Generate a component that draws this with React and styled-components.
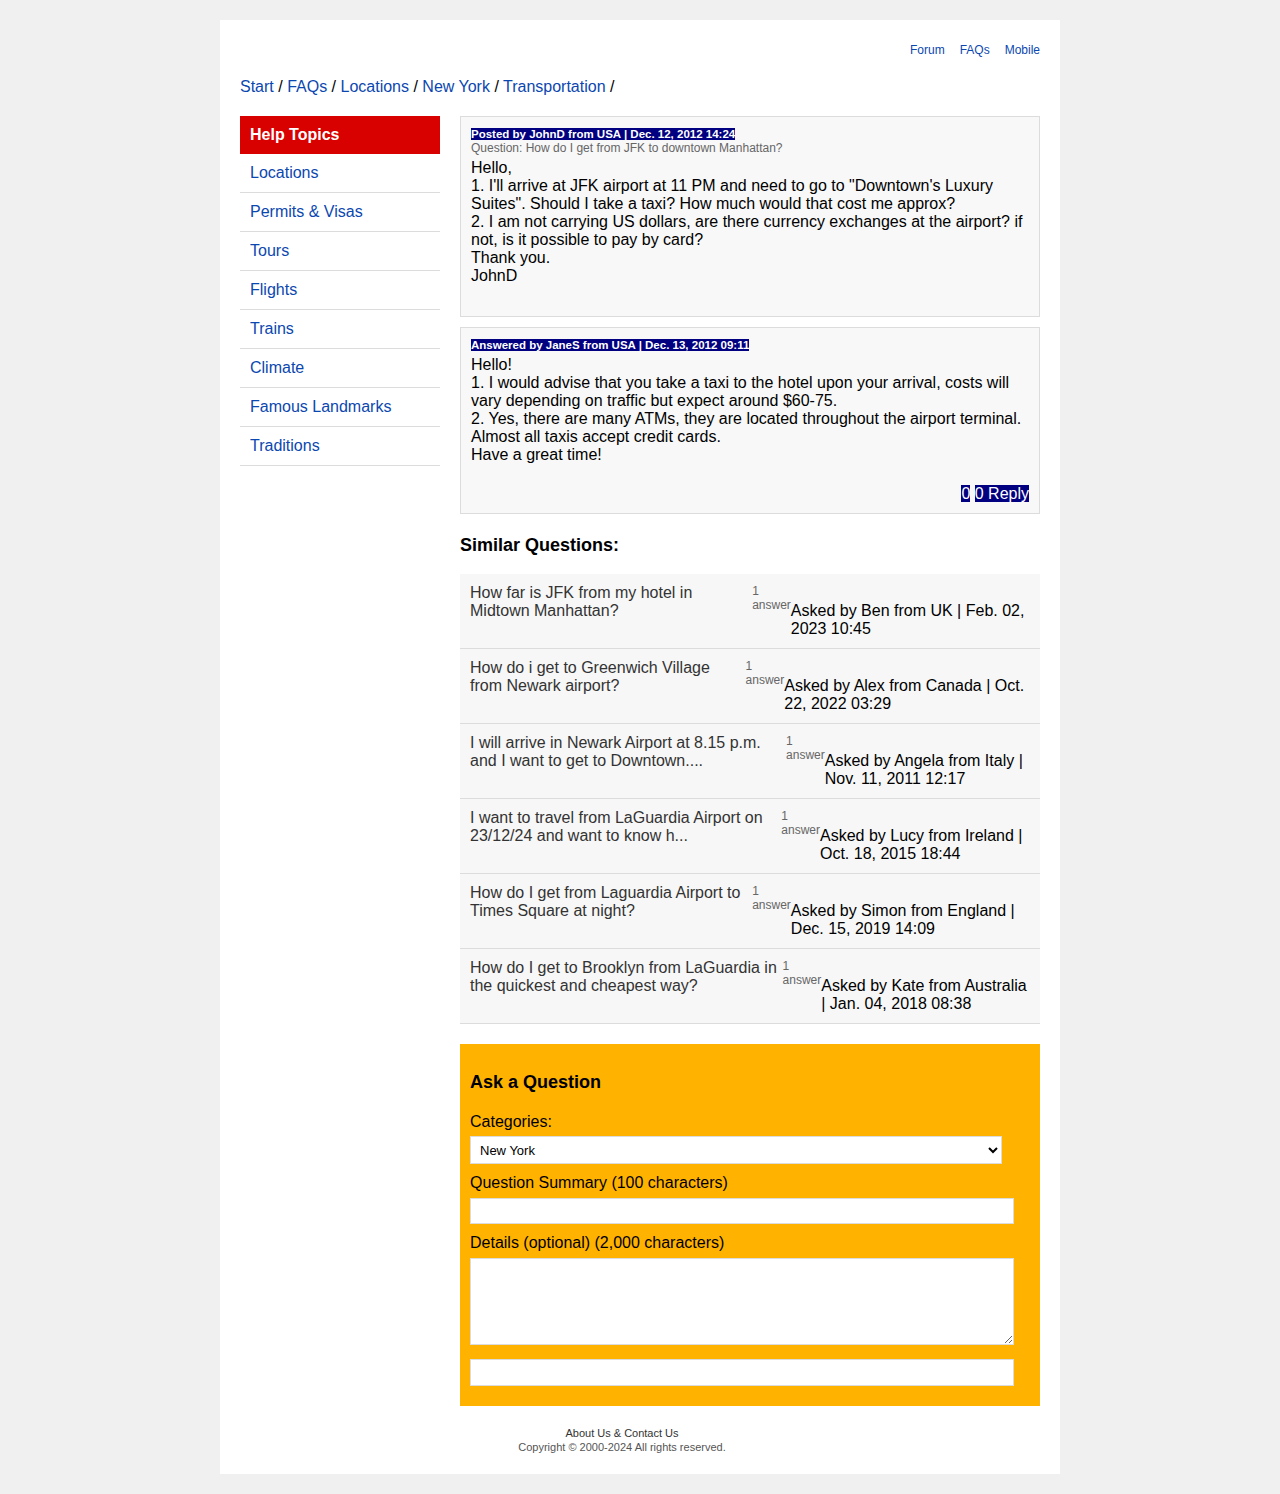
import React from "react";
import styled, { createGlobalStyle } from "styled-components";

const GlobalStyle = createGlobalStyle`
  html, body { margin: 0; padding: 0; }
  body {
    background: #f0f0f0;
    font-family: "Liberation Sans", Arial, sans-serif;
    color: #000;
  }
`;

const LINK = "#0b47b0";
const NAVY = "#000080";

const Page = styled.div`
  width: 800px;
  margin: 20px auto;
  padding: 20px;
  background: #fff;
`;

const TopNav = styled.nav`
  display: flex;
  justify-content: flex-end;
  gap: 15px;
  margin-top: 3px;
  font-size: 12px;
  line-height: 14px;
`;

const NavLink = styled.a`
  color: ${LINK};
  text-decoration: none;
`;

const Breadcrumb = styled.div`
  margin: 21px 0 20px;
  font-size: 16px;
  line-height: 18px;
`;

const CrumbLink = styled.a`
  color: ${LINK};
  text-decoration: none;
`;

const Columns = styled.div`
  display: flex;
  gap: 20px;
  align-items: flex-start;
`;

const Sidebar = styled.aside`
  width: 200px;
  flex: 0 0 200px;
`;

const SideHeader = styled.div`
  background: #d90000;
  color: #fff;
  font-weight: bold;
  font-size: 16px;
  height: 38px;
  line-height: 38px;
  padding: 0 10px;
`;

const SideItem = styled.a`
  display: block;
  padding: 10px;
  font-size: 16px;
  line-height: 18px;
  color: ${LINK};
  text-decoration: none;
  border-bottom: 1px solid #dcdcdc;
`;

const Main = styled.main`
  width: 580px;
  flex: 0 0 580px;
`;

const PostBox = styled.div`
  border: 1px solid #dcdcdc;
  background: #f8f8f8;
  padding: 10px;
  margin-bottom: ${(p) => p.$mb || 0}px;
`;

const Meta = styled.div`
  font-size: 11.5px;
  line-height: 14px;
  font-weight: bold;
`;

const MetaText = styled.span`
  background: ${NAVY};
  color: #fff;
`;

const QuestionLine = styled.div`
  font-size: 12px;
  line-height: 14px;
  color: #666;
`;

const Body = styled.div`
  margin-top: 4px;
  font-size: 16px;
  line-height: 18px;
  padding-bottom: ${(p) => p.$pb || 0}px;
`;

const ReplyRow = styled.div`
  margin-top: 21px;
  text-align: right;
  font-size: 16px;
  line-height: 18px;
`;

const Pill = styled.span`
  background: ${NAVY};
  color: #fff;
`;

const SectionTitle = styled.h3`
  font-size: 18px;
  line-height: 21px;
  font-weight: bold;
  margin: 21px 0 18px;
`;

const QList = styled.div``;

const QRow = styled.div`
  display: flex;
  padding: 10px;
  background: #f7f7f7;
  border-bottom: 1px solid #dcdcdc;
`;

const QText = styled.a`
  font-size: 16px;
  line-height: 18px;
  color: #333;
  text-decoration: none;
  align-self: flex-start;
`;

const QCount = styled.span`
  font-size: 12px;
  line-height: 14px;
  color: #666;
  align-self: flex-start;
`;

const QAsked = styled.span`
  font-size: 16px;
  line-height: 18px;
  margin-top: 18px;
  align-self: flex-end;
`;

const AskBox = styled.section`
  margin-top: 20px;
  background: #ffb200;
  padding: 10px 10px 20px;
`;

const AskTitle = styled.h3`
  font-size: 18px;
  line-height: 21px;
  font-weight: bold;
  margin: 18px 0 20px;
`;

const Label = styled.label`
  display: block;
  font-size: 16px;
  line-height: 18px;
  margin-bottom: ${(p) => p.$mb || 5}px;
`;

const Select = styled.select`
  display: block;
  box-sizing: border-box;
  width: 532px;
  height: 28px;
  padding: 0 5px;
  margin-bottom: 10px;
  border: 1px solid #dcdcdc;
  border-radius: 0;
  background: #fff;
  font-family: "Liberation Sans", Arial, sans-serif;
  font-size: 13px;
  color: #000;
`;

const Input = styled.input`
  display: block;
  box-sizing: border-box;
  width: 544px;
  height: ${(p) => p.$h || 26}px;
  padding: 4px;
  margin-bottom: 10px;
  border: 1px solid #dcdcdc;
  background: #fff;
  font-family: "Liberation Sans", Arial, sans-serif;
  font-size: 14px;
  &:last-child { margin-bottom: 0; }
`;

const TextArea = styled.textarea`
  display: block;
  box-sizing: border-box;
  width: 544px;
  height: 87px;
  padding: 4px;
  margin-bottom: 14px;
  border: 1px solid #dcdcdc;
  background: #fff;
  font-family: "Liberation Sans", Arial, sans-serif;
  font-size: 14px;
`;

const Footer = styled.footer`
  margin-top: 20px;
  padding-right: 36px;
  text-align: center;
  font-size: 11px;
  line-height: 14px;
`;

const FooterLink = styled.a`
  color: #333;
  text-decoration: none;
`;

const Copy = styled.div`
  color: #555;
`;

const crumbs = ["Start", "FAQs", "Locations", "New York", "Transportation"];
const topics = [
  "Locations",
  "Permits & Visas",
  "Tours",
  "Flights",
  "Trains",
  "Climate",
  "Famous Landmarks",
  "Traditions",
];

const similar = [
  ["How far is JFK from my hotel in Midtown Manhattan?", "Asked by Ben from UK | Feb. 02, 2023 10:45"],
  ["How do i get to Greenwich Village from Newark airport?", "Asked by Alex from Canada | Oct. 22, 2022 03:29"],
  ["I will arrive in Newark Airport at 8.15 p.m. and I want to get to Downtown....", "Asked by Angela from Italy | Nov. 11, 2011 12:17"],
  ["I want to travel from LaGuardia Airport on 23/12/24 and want to know h...", "Asked by Lucy from Ireland | Oct. 18, 2015 18:44"],
  ["How do I get from Laguardia Airport to Times Square at night?", "Asked by Simon from England | Dec. 15, 2019 14:09"],
  ["How do I get to Brooklyn from LaGuardia in the quickest and cheapest way?", "Asked by Kate from Australia | Jan. 04, 2018 08:38"],
];

export default function App() {
  return (
    <>
      <GlobalStyle />
      <Page>
        <TopNav>
          <NavLink href="#">Forum</NavLink>
          <NavLink href="#">FAQs</NavLink>
          <NavLink href="#">Mobile</NavLink>
        </TopNav>
        <Breadcrumb>
          {crumbs.map((c) => (
            <React.Fragment key={c}>
              <CrumbLink href="#">{c}</CrumbLink> /{" "}
            </React.Fragment>
          ))}
        </Breadcrumb>
        <Columns>
          <Sidebar>
            <SideHeader>Help Topics</SideHeader>
            {topics.map((t) => (
              <SideItem key={t} href="#">
                {t}
              </SideItem>
            ))}
          </Sidebar>
          <Main>
            <PostBox $mb={10}>
              <Meta>
                <MetaText>Posted by JohnD from USA | Dec. 12, 2012 14:24</MetaText>
              </Meta>
              <QuestionLine>Question: How do I get from JFK to downtown Manhattan?</QuestionLine>
              <Body $pb={21}>
                Hello,
                <br />
                1. I'll arrive at JFK airport at 11 PM and need to go to "Downtown's Luxury Suites". Should I take a taxi? How much would that cost me approx?
                <br />
                2. I am not carrying US dollars, are there currency exchanges at the airport? if not, is it possible to pay by card?
                <br />
                Thank you.
                <br />
                JohnD
              </Body>
            </PostBox>
            <PostBox>
              <Meta>
                <MetaText>Answered by JaneS from USA | Dec. 13, 2012 09:11</MetaText>
              </Meta>
              <Body>
                Hello!
                <br />
                1. I would advise that you take a taxi to the hotel upon your arrival, costs will vary depending on traffic but expect around $60-75.
                <br />
                2. Yes, there are many ATMs, they are located throughout the airport terminal. Almost all taxis accept credit cards.
                <br />
                Have a great time!
              </Body>
              <ReplyRow>
                <Pill>0</Pill> <Pill>0 Reply</Pill>
              </ReplyRow>
            </PostBox>

            <SectionTitle>Similar Questions:</SectionTitle>
            <QList>
              {similar.map(([q, a]) => (
                <QRow key={q}>
                  <QText href="#">{q}</QText>
                  <QCount>1 answer</QCount>
                  <QAsked>{a}</QAsked>
                </QRow>
              ))}
            </QList>

            <AskBox>
              <AskTitle>Ask a Question</AskTitle>
              <Label>Categories:</Label>
              <Select defaultValue="New York">
                <option>New York</option>
              </Select>
              <Label $mb={6}>Question Summary (100 characters)</Label>
              <Input type="text" />
              <Label $mb={6}>Details (optional) (2,000 characters)</Label>
              <TextArea />
              <Input type="text" $h={27} />
            </AskBox>
          </Main>
        </Columns>
        <Footer>
          <FooterLink href="#">About Us &amp; Contact Us</FooterLink>
          <Copy>Copyright © 2000-2024 All rights reserved.</Copy>
        </Footer>
      </Page>
    </>
  );
}
